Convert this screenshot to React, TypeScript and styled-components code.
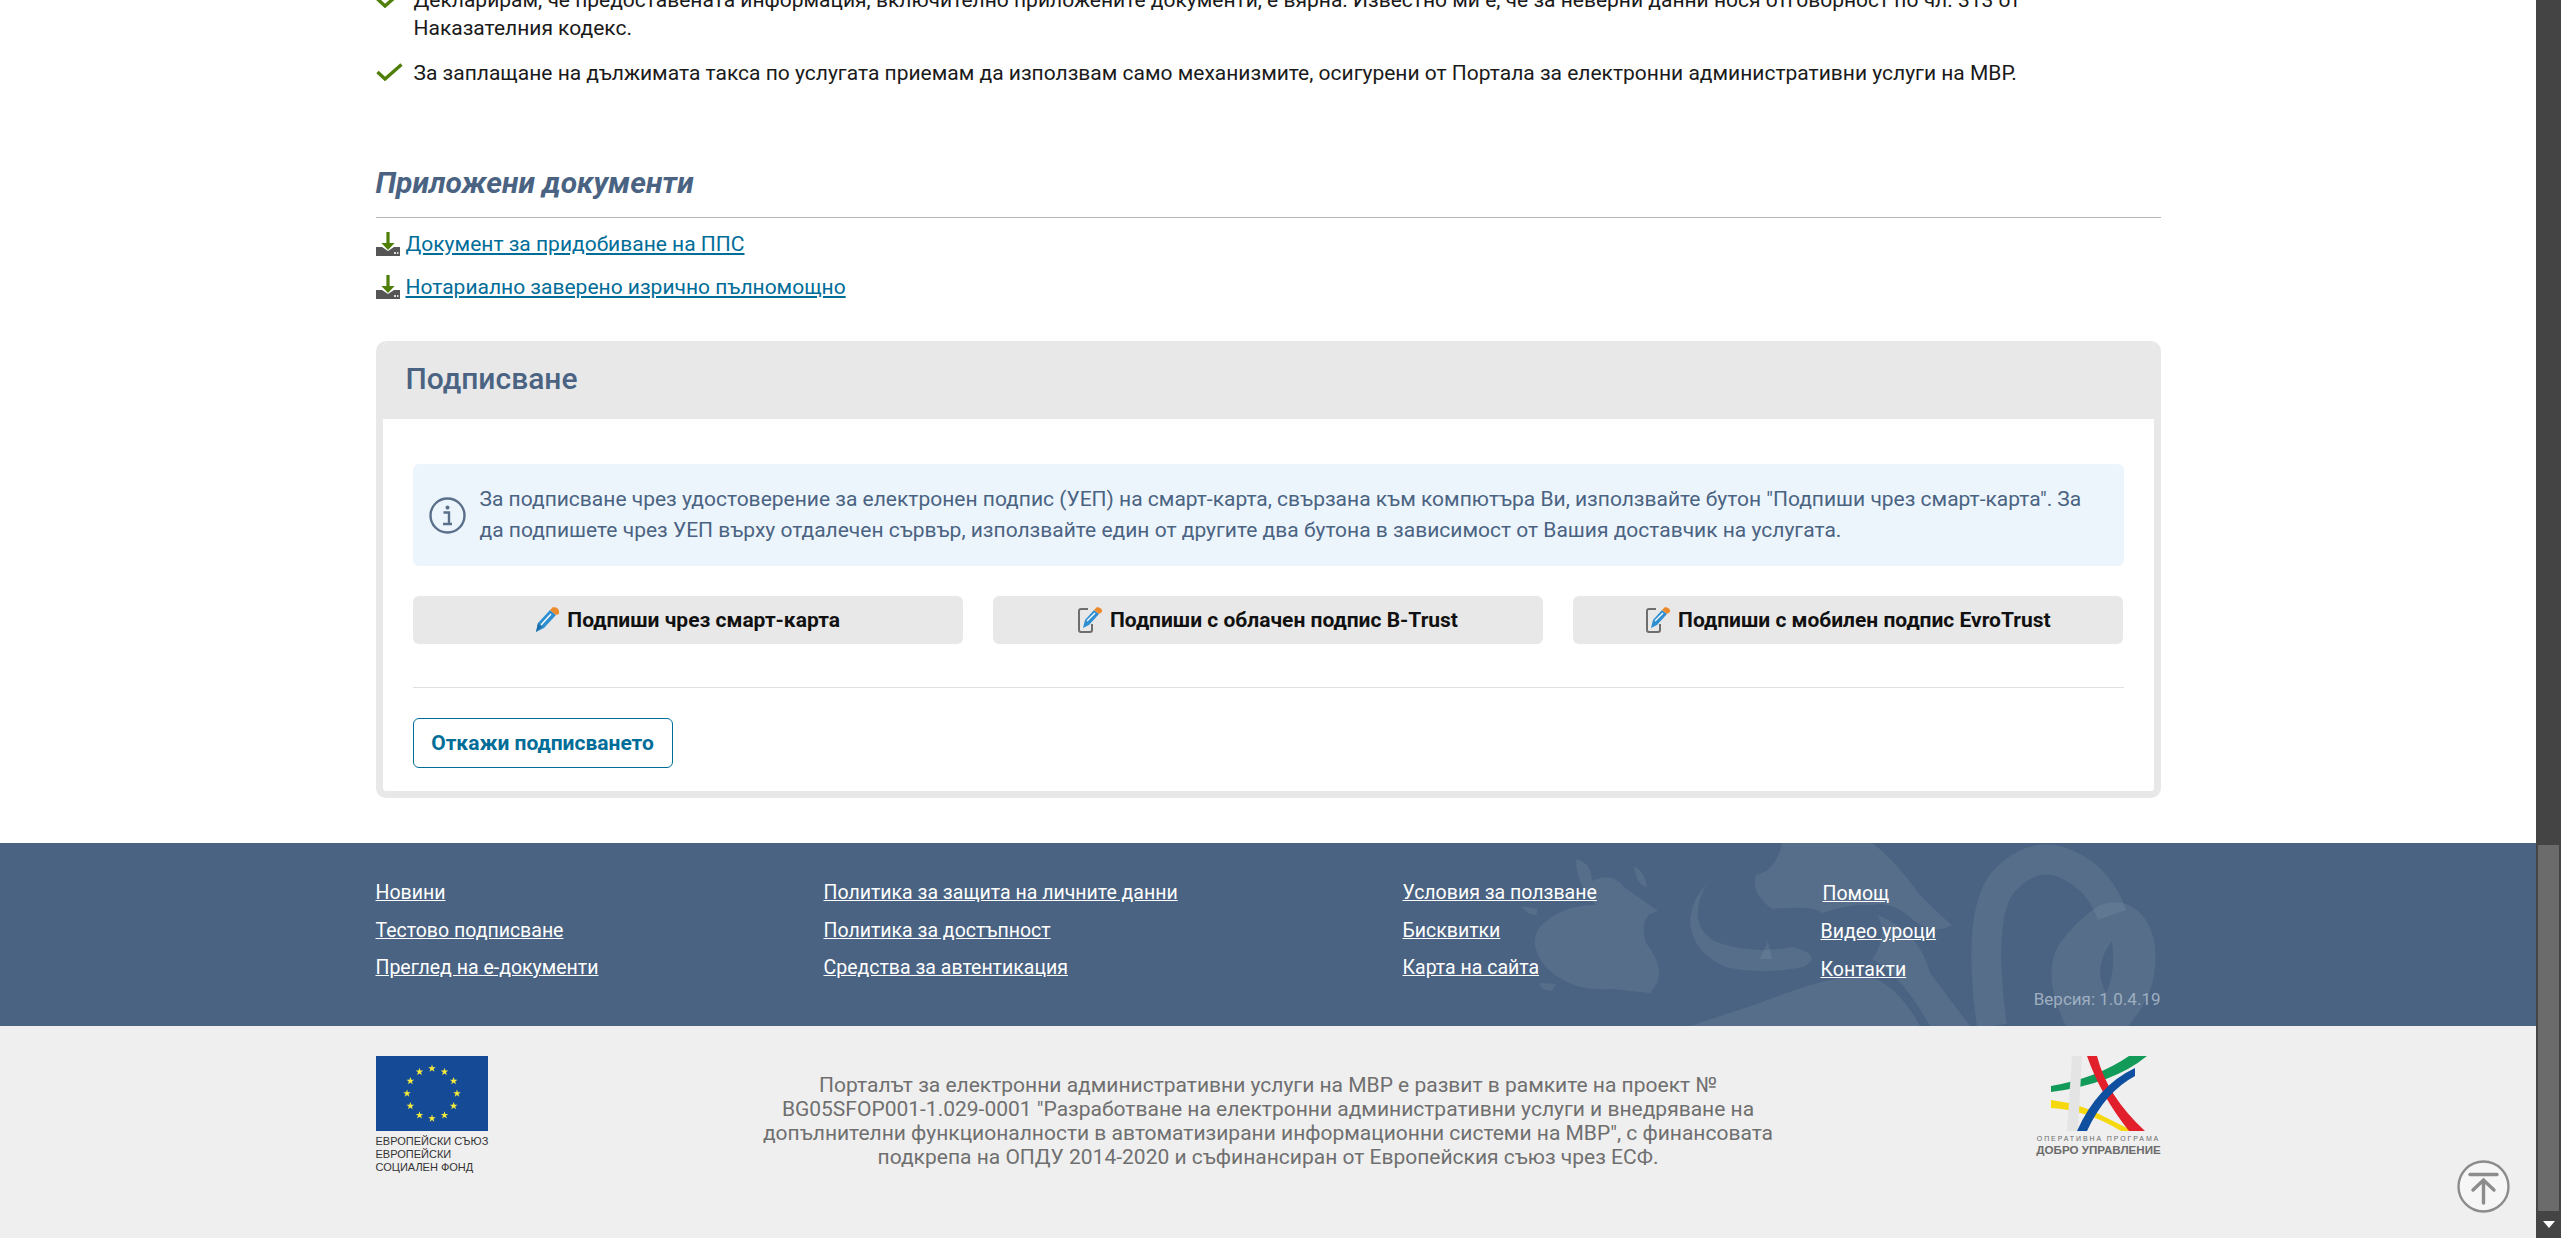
import React from 'react';
import styled, { createGlobalStyle } from 'styled-components';

const GlobalStyle = createGlobalStyle`
  html, body { margin: 0; padding: 0; height: 100%; overflow: hidden; background: #fff; }
  body { font-family: Roboto, "Noto Sans", sans-serif; color: #1a1a1a; }
  * { box-sizing: border-box; }
`;

// --- Page frame ---
const Frame = styled.div`
  display: flex;
  height: 100vh;
`;

const Main = styled.main`
  flex: 1;
  min-width: 0;
  overflow: hidden;
`;

const Container = styled.div`
  width: 1785px;
  margin: 0 auto;
`;

const Scrollbar = styled.div`
  width: 25px;
  background: #444444;
  display: flex;
  flex-direction: column;
  justify-content: flex-end;
  align-items: center;
`;

const ScrollThumb = styled.div`
  width: 21px;
  height: 366px;
  background: #6b6b6b;
`;

const ScrollArrow = styled.div`
  height: 27px;
  display: flex;
  align-items: center;
  justify-content: center;
  &::after {
    content: '';
    border-left: 6px solid transparent;
    border-right: 6px solid transparent;
    border-top: 7px solid #ffffff;
  }
`;

// --- Declarations ---
const Declarations = styled.ul`
  list-style: none;
  margin: -14px 0 0;
  padding: 0;
`;

const Declaration = styled.li`
  display: grid;
  grid-template-columns: 38px 1fr;
  font-size: 21px;
  line-height: 28px;
  margin-bottom: 17px;
`;

const CheckIcon = styled.svg`
  width: 27px;
  height: 18px;
  margin-top: 4px;
`;

// --- Attachments ---
const SectionTitle = styled.h2`
  margin: 78px 0 0;
  padding-bottom: 16px;
  border-bottom: 1px solid #b5b5b5;
  font-size: 30px;
  line-height: 36px;
  font-style: italic;
  font-weight: 700;
  color: #4a6382;
`;

const DocList = styled.div`
  display: flex;
  flex-direction: column;
  gap: 13px;
  margin-top: 11px;
`;

const DocRow = styled.div`
  display: flex;
  align-items: center;
  gap: 6px;
  height: 30px;
`;

const DocLink = styled.a`
  font-size: 21px;
  color: #006d98;
  text-decoration: underline;
`;

// --- Signing card ---
const Card = styled.section`
  margin-top: 39px;
  border: 7px solid #e8e8e8;
  border-top: 0;
  border-radius: 10px;
  overflow: hidden;
  background: #fff;
`;

const CardHead = styled.h3`
  margin: 0 -7px;
  height: 78px;
  padding: 0 30px 3px;
  display: flex;
  align-items: center;
  background: #e8e8e8;
  font-size: 30px;
  font-weight: 500;
  color: #4a6382;
`;

const CardBody = styled.div`
  padding: 45px 30px 23px;
`;

const InfoBox = styled.div`
  display: flex;
  align-items: center;
  gap: 14px;
  height: 102px;
  padding: 0 16px;
  background: #edf5fc;
  border-radius: 6px;
  font-size: 21px;
  line-height: 31px;
  color: #4a6382;
`;

const InfoIcon = styled.svg`
  flex: none;
  width: 37px;
  height: 37px;
`;

const SignRow = styled.div`
  display: grid;
  grid-template-columns: repeat(3, 1fr);
  gap: 30px;
  margin-top: 30px;
`;

const SignButton = styled.button`
  height: 48px;
  border: 0;
  border-radius: 6px;
  background: #e8e8e8;
  display: flex;
  align-items: center;
  justify-content: center;
  gap: 6px;
  font-family: inherit;
  font-size: 21px;
  font-weight: 700;
  color: #111;
`;

const Divider = styled.hr`
  border: 0;
  border-top: 1px solid #e0e0e0;
  margin: 43px 0 30px;
`;

const CancelButton = styled.button`
  width: 260px;
  height: 50px;
  border: 1px solid #006d98;
  border-radius: 6px;
  background: #fff;
  font-family: inherit;
  font-size: 21px;
  font-weight: 700;
  color: #006d98;
`;

// --- Footer ---
const LinksBand = styled.footer`
  position: relative;
  margin-top: 45px;
  height: 183px;
  background: #4a6382;
  overflow: hidden;
`;

const LionMark = styled.svg`
  position: absolute;
  left: 1500px;
  top: 0;
  width: 680px;
  height: 183px;
`;

const LinksGrid = styled(Container)`
  position: relative;
  height: 100%;
  display: grid;
  grid-template-columns: 448px 579px 418px 1fr;
  padding-top: 38px;
`;

const LinkColumn = styled.div<{ $gap: number; $shift?: number }>`
  display: flex;
  flex-direction: column;
  align-items: flex-start;
  gap: ${p => p.$gap}px;
  margin-top: ${p => p.$shift ?? 0}px;
`;

const FooterLink = styled.a`
  font-size: 19.5px;
  line-height: 24px;
  color: #fff;
  text-decoration: underline;
`;

const HelpLink = styled(FooterLink)`
  margin-left: 2px;
`;

const Version = styled.span`
  position: absolute;
  right: 0;
  top: 146px;
  font-size: 17px;
  line-height: 20px;
  color: #9fafc0;
`;

const FundingBand = styled.div`
  height: 212px;
  background: #efefef;
  padding-top: 30px;
`;

const FundingGrid = styled(Container)`
  display: grid;
  grid-template-columns: 124px 1fr 124px;
`;

const EuLogo = styled.div`
  display: flex;
  flex-direction: column;
  font-family: "Liberation Sans", Arial, sans-serif;
  font-size: 11px;
  line-height: 13px;
  color: #333;
  white-space: nowrap;
`;

const EuFlag = styled.svg`
  width: 112px;
  height: 75px;
  margin-bottom: 4px;
  display: block;
`;

const FundingText = styled.p`
  margin: 17px 0 0;
  text-align: center;
  font-size: 21px;
  line-height: 24px;
  color: #6f6f6f;
`;

const OpLogo = styled.div`
  display: flex;
  flex-direction: column;
  align-items: center;
  font-family: "Liberation Sans", Arial, sans-serif;
  color: #6b6b6b;
  white-space: nowrap;
`;

const OpMark = styled.svg`
  width: 124px;
  height: 76px;
  display: block;
`;

const OpLine = styled.span`
  font-size: 7px;
  line-height: 8px;
  letter-spacing: 1.9px;
  margin-top: 3px;
`;

const OpName = styled.span`
  font-size: 11.6px;
  line-height: 14px;
  font-weight: 700;
`;

const ToTop = styled.button`
  position: fixed;
  left: 2457px;
  top: 1160px;
  width: 53px;
  height: 53px;
  padding: 0;
  border: 0;
  background: none;
`;

// --- Drawings ---
const Check = () => (
  <CheckIcon viewBox="0 0 27 18">
    <path d="M1.5 9 L9 16 L25.5 1.5" fill="none" stroke="#4f7f08" strokeWidth="3.4" />
  </CheckIcon>
);

const DownloadIcon = () => (
  <svg width="24" height="24" viewBox="0 0 24 24">
    <path d="M0 15h6l6 4 6-4h6v9H0z" fill="#555" />
    <path d="M10.4 0h3.2v11h5l-6.6 7-6.6-7h5z" fill="#4f7f08" />
    <rect x="18" y="20" width="2" height="2" fill="#ddd" />
    <rect x="21" y="20" width="1.4" height="2" fill="#ddd" />
  </svg>
);

const Pencil = () => (
  <svg width="26" height="26" viewBox="0 0 26 26">
    <path d="M1 25 L3 16 L15 3 L21 8 L9 21z" fill="#2e8fd0" />
    <path d="M1 25 L3 16 L7 20z" fill="#1c6ea8" />
    <path d="M6 18 L16 7" stroke="#fff" strokeWidth="1.4" />
    <path d="M15 3 L18 0 Q25 0 24 7 L21 8z" fill="#ec8b2c" />
  </svg>
);

const PhonePencil = () => (
  <svg width="26" height="26" viewBox="0 0 26 26">
    <path d="M10 2H3Q1 2 1 4v19q0 2 2 2h9q2 0 2-2v-6" fill="none" stroke="#6e6e6e" strokeWidth="2" />
    <path d="M5 21 L7 13 L16 3 L21 7 L11 18z" fill="#2e8fd0" />
    <path d="M9 14 L17 6" stroke="#fff" strokeWidth="1.2" />
    <path d="M16 3 L19 0 Q25 1 24 5 L21 7z" fill="#ec8b2c" />
  </svg>
);

const STARS = Array.from({ length: 12 }, (_, i) => {
  const a = (i * Math.PI) / 6;
  return { x: 56 + 25 * Math.sin(a), y: 37.5 - 25 * Math.cos(a) };
});

const starPoints = (cx: number, cy: number) =>
  Array.from({ length: 10 }, (_, i) => {
    const r = i % 2 === 0 ? 4 : 1.6;
    const a = (i * Math.PI) / 5;
    return `${(cx + r * Math.sin(a)).toFixed(1)},${(cy - r * Math.cos(a)).toFixed(1)}`;
  }).join(' ');

const FOOTER_COLUMNS = [
  ['Новини', 'Тестово подписване', 'Преглед на е-документи'],
  ['Политика за защита на личните данни', 'Политика за достъпност', 'Средства за автентикация'],
  ['Условия за ползване', 'Бисквитки', 'Карта на сайта'],
];

export default function App() {
  return (
    <Frame>
      <GlobalStyle />
      <Main>
        <Container>
          <Declarations>
            <Declaration>
              <Check />
              <span>
                Декларирам, че предоставената информация, включително приложените документи, е вярна. Известно ми е, че за неверни данни нося отговорност по чл. 313 от Наказателния кодекс.
              </span>
            </Declaration>
            <Declaration>
              <Check />
              <span>
                За заплащане на дължимата такса по услугата приемам да използвам само механизмите, осигурени от Портала за електронни административни услуги на МВР.
              </span>
            </Declaration>
          </Declarations>

          <SectionTitle>Приложени документи</SectionTitle>
          <DocList>
            <DocRow>
              <DownloadIcon />
              <DocLink>Документ за придобиване на ППС</DocLink>
            </DocRow>
            <DocRow>
              <DownloadIcon />
              <DocLink>Нотариално заверено изрично пълномощно</DocLink>
            </DocRow>
          </DocList>

          <Card>
            <CardHead>Подписване</CardHead>
            <CardBody>
              <InfoBox>
                <InfoIcon viewBox="0 0 37 37">
                  <circle cx="18.5" cy="18.5" r="17" fill="none" stroke="#5a6f8a" strokeWidth="2.4" />
                  <circle cx="18.5" cy="10.5" r="2" fill="#5a6f8a" />
                  <path d="M14.5 15.5h5.5v11M14 27h9" fill="none" stroke="#5a6f8a" strokeWidth="2.4" />
                </InfoIcon>
                <span>
                  За подписване чрез удостоверение за електронен подпис (УЕП) на смарт-карта, свързана към компютъра Ви, използвайте бутон "Подпиши чрез смарт-карта". За да подпишете чрез УЕП върху отдалечен сървър, използвайте един от другите два бутона в зависимост от Вашия доставчик на услугата.
                </span>
              </InfoBox>
              <SignRow>
                <SignButton><Pencil />Подпиши чрез смарт-карта</SignButton>
                <SignButton><PhonePencil />Подпиши с облачен подпис B-Trust</SignButton>
                <SignButton><PhonePencil />Подпиши с мобилен подпис EvroTrust</SignButton>
              </SignRow>
              <Divider />
              <CancelButton>Откажи подписването</CancelButton>
            </CardBody>
          </Card>
        </Container>

        <LinksBand>
          <LionMark viewBox="0 0 680 183">
            <g fill="#ffffff" fillOpacity="0.07">
              <path d="M76 16 Q92 20 92 38 Q112 28 124 44 L158 68 Q138 72 146 100 Q170 130 150 150 L112 146 Q70 150 44 122 Q28 100 40 84 Q60 62 96 62 Q76 42 76 16Z" />
              <path d="M134 23 Q146 30 147 44 Q136 42 134 23Z" />
              <path d="M22 63 L38 66 L36 72 Q26 72 22 63Z" />
              <path d="M39 140 L56 141 L52 148 Q42 148 39 140Z" />
              <path d="M206 42 Q186 80 214 98 Q250 112 292 104 Q324 112 304 124 Q260 132 226 124 Q192 110 190 78 Q192 56 206 42Z" />
              <path d="M256 32 Q276 28 282 0 L372 0 Q392 14 420 52 Q444 76 452 82 Q436 92 414 78 Q394 58 372 62 Q352 60 322 70 Q314 62 272 66 Q250 50 256 32Z" />
              <path d="M190 183 L260 160 Q340 128 372 134 Q400 146 420 183Z" />
              <path d="M378 72 Q420 90 430 130 L470 183 L430 183 Q400 130 372 116 Q388 96 378 72Z" />
              <path d="M260 116 L268 98 L272 116Z" />
            </g>
            <path d="M492 183 Q476 70 504 38 Q536 4 572 24 Q600 38 612 72" fill="none" stroke="#ffffff" strokeOpacity="0.07" strokeWidth="30" />
            <path d="M600 62 Q640 50 654 96 Q662 146 628 183 L566 183 Q540 130 560 100 Q578 76 600 62Z M612 98 Q592 124 606 150 Q616 130 612 98Z" fill="#ffffff" fillOpacity="0.07" fillRule="evenodd" />
          </LionMark>
          <LinksGrid>
            {FOOTER_COLUMNS.map(col => (
              <LinkColumn key={col[0]} $gap={13.5}>
                {col.map(text => <FooterLink key={text}>{text}</FooterLink>)}
              </LinkColumn>
            ))}
            <LinkColumn $gap={14} $shift={1}>
              <HelpLink>Помощ</HelpLink>
              <FooterLink>Видео уроци</FooterLink>
              <FooterLink>Контакти</FooterLink>
            </LinkColumn>
            <Version>Версия: 1.0.4.19</Version>
          </LinksGrid>
        </LinksBand>

        <FundingBand>
          <FundingGrid>
            <EuLogo>
              <EuFlag viewBox="0 0 112 75">
                <rect width="112" height="75" fill="#154a97" />
                {STARS.map((s, i) => (
                  <polygon key={i} points={starPoints(s.x, s.y)} fill="#f4ea3a" />
                ))}
              </EuFlag>
              <span>ЕВРОПЕЙСКИ СЪЮЗ</span>
              <span>ЕВРОПЕЙСКИ</span>
              <span>СОЦИАЛЕН ФОНД</span>
            </EuLogo>
            <FundingText>
              Порталът за електронни административни услуги на МВР е развит в рамките на проект №<br />
              BG05SFOP001-1.029-0001 "Разработване на електронни административни услуги и внедряване на<br />
              допълнителни функционалности в автоматизирани информационни системи на МВР", с финансовата<br />
              подкрепа на ОПДУ 2014-2020 и съфинансиран от Европейския съюз чрез ЕСФ.
            </FundingText>
            <OpLogo>
              <OpMark viewBox="0 0 124 76">
                <path d="M14 30 Q60 22 92 0 L110 0 Q76 28 14 36Z" fill="#119a58" />
                <path d="M14 44 Q45 48 66 60 L96 75 L84 75 Q50 54 14 52Z" fill="#f6d80f" />
                <path d="M35 0 H45 L41 75 H30Z" fill="#e4e4e4" />
                <path d="M50 0 H60 Q70 40 108 75 H92 Q64 40 50 0Z" fill="#e2202c" />
                <path d="M98 12 V20 Q68 36 50 75 H40 Q60 30 98 12Z" fill="#0f4fa0" />
              </OpMark>
              <OpLine>ОПЕРАТИВНА ПРОГРАМА</OpLine>
              <OpName>ДОБРО УПРАВЛЕНИЕ</OpName>
            </OpLogo>
          </FundingGrid>
        </FundingBand>
      </Main>

      <Scrollbar>
        <ScrollThumb />
        <ScrollArrow />
      </Scrollbar>

      <ToTop aria-label="Нагоре">
        <svg width="53" height="53" viewBox="0 0 53 53">
          <circle cx="26.5" cy="26.5" r="25" fill="#f6f6f6" stroke="#8c8c8c" strokeWidth="2.4" />
          <path d="M13 14.5h27" stroke="#8c8c8c" strokeWidth="3.4" strokeLinecap="round" />
          <path d="M26.5 43V20M16 30l10.5-10 10.5 10" fill="none" stroke="#8c8c8c" strokeWidth="3.4" strokeLinecap="round" />
        </svg>
      </ToTop>
    </Frame>
  );
}
